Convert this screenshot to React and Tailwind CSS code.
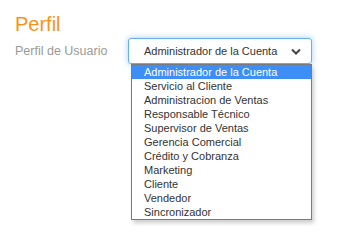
import React from "react";

const roles = [
  "Administrador de la Cuenta",
  "Servicio al Cliente",
  "Administracion de Ventas",
  "Responsable Técnico",
  "Supervisor de Ventas",
  "Gerencia Comercial",
  "Crédito y Cobranza",
  "Marketing",
  "Cliente",
  "Vendedor",
  "Sincronizador",
];

export default function App() {
  const selected = 0;

  return (
    <div
      className="w-[362px] h-[240px] bg-white pl-[15px] pt-[12px]"
      style={{ fontFamily: '"Liberation Sans", Arial, sans-serif' }}
    >
      <h1 className="text-[20px] leading-[24px] text-[#f7941d]">Perfil</h1>
      <div className="flex items-center mt-[2px]">
        <label className="w-[113px] text-[12.5px] text-[#9a9a9a]">
          Perfil de Usuario
        </label>
        <div className="relative">
          <div className="w-[184px] h-[26px] flex items-center justify-between pl-[15px] pr-[10px] rounded-[3px] border border-[#66afe9] shadow-[0_0_6px_rgba(102,175,233,0.6)] bg-white">
            <span className="text-[11px] text-[#333]">{roles[selected]}</span>
            <svg width="10" height="7" viewBox="0 0 10 7">
              <polyline
                points="1,1.5 5,5.5 9,1.5"
                fill="none"
                stroke="#444"
                strokeWidth="2"
              />
            </svg>
          </div>
          <ul className="absolute left-[3px] top-[26px] w-[181px] border border-[#7a7a7a] bg-white shadow-[2px_3px_4px_rgba(0,0,0,0.2)]">
            {roles.map((r, i) => (
              <li
                key={r}
                className={
                  i === selected
                    ? "h-[14px] leading-[14px] pl-[12px] text-[11px] bg-[#3e8ef7] text-white"
                    : "h-[14px] leading-[14px] pl-[12px] text-[11px] text-[#333]"
                }
              >
                {r}
              </li>
            ))}
          </ul>
        </div>
      </div>
    </div>
  );
}
